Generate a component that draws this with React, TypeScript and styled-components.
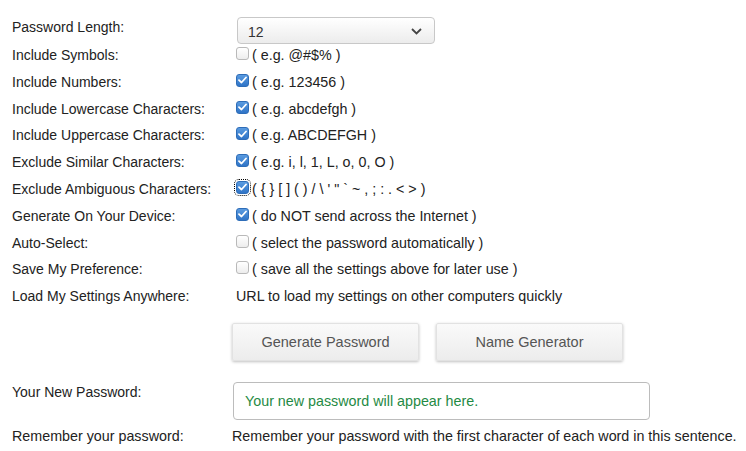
import React from "react";
import styled, { createGlobalStyle, css } from "styled-components";

const Global = createGlobalStyle`
  html, body { margin: 0; padding: 0; background: #fff; }
  body { font-family: "Liberation Sans", Arial, sans-serif; font-size: 14px; color: #222; }
`;

const Page = styled.div`
  padding: 17px 0 0 12px;
  display: flex;
  flex-direction: column;
`;

const Settings = styled.div`
  display: flex;
  flex-direction: column;
  gap: 6.8px;
`;

const Row = styled.div<{ $first?: boolean }>`
  display: grid;
  grid-template-columns: 220px 1fr;
  align-items: center;
  height: 20px;
  ${(p) => p.$first && css`
    align-items: start;
    height: 27px;
    margin-bottom: -5.8px;
  `}
`;

const Label = styled.div`
  line-height: 20px;
  white-space: nowrap;
`;

const Value = styled.div`
  display: flex;
  align-items: center;
  padding-left: 4px;
  line-height: 20px;
  font-size: 14.3px;
  white-space: nowrap;
`;

const Select = styled.div`
  margin-left: 1px;
  width: 198px;
  height: 27px;
  box-sizing: border-box;
  border: 1px solid #c8c8c8;
  border-radius: 4px;
  background: linear-gradient(#ffffff, #ececec);
  display: flex;
  align-items: center;
  justify-content: space-between;
  padding: 2px 12px 0 10px;
  color: #333;
  font-size: 14px;
`;

const Box = styled.span<{ $checked: boolean; $focus?: boolean }>`
  box-sizing: border-box;
  width: 13px;
  height: 13px;
  border-radius: 3px;
  margin-right: 3px;
  margin-top: -3px;
  display: inline-flex;
  align-items: center;
  justify-content: center;
  ${(p) =>
    p.$checked
      ? css`
          background: linear-gradient(#5a9be0, #2f74c7);
          border: 1px solid #2e6db8;
        `
      : css`
          background: linear-gradient(#ffffff, #ededed);
          border: 1px solid #b9b9b9;
        `}
  ${(p) => p.$focus && css`
    outline: 1px dotted #000;
    outline-offset: 1px;
  `}
`;

const Checkbox = ({ checked, focus }: { checked: boolean; focus?: boolean }) => (
  <Box $checked={checked} $focus={focus} role="checkbox" aria-checked={checked}>
    {checked && (
      <svg width="9" height="8" viewBox="0 0 9 8">
        <path d="M1 4.2 L3.5 6.5 L8 1.5" fill="none" stroke="#fff" strokeWidth="1.8" strokeLinecap="round" strokeLinejoin="round" />
      </svg>
    )}
  </Box>
);

const Buttons = styled.div`
  display: flex;
  gap: 17px;
  margin: 17px 0 0 220px;
`;

const Button = styled.button`
  width: 187px;
  height: 38px;
  border: 1px solid #e2e2e2;
  border-radius: 2px;
  background: linear-gradient(#fafafa, #ececec);
  box-shadow: 0 1px 3px rgba(0, 0, 0, 0.25);
  font-family: "Liberation Sans", Arial, sans-serif;
  font-size: 14.5px;
  color: #555;
  padding: 0;
`;

const Output = styled.div`
  display: grid;
  grid-template-columns: 221px 1fr;
  align-items: start;
  margin-top: 21px;
`;

const OutputBox = styled.div`
  width: 417px;
  height: 38px;
  box-sizing: border-box;
  border: 1px solid #bcbcbc;
  border-radius: 4px;
  display: flex;
  align-items: center;
  padding: 0 0 0 11px;
  color: #1f8a44;
  font-size: 14.3px;
`;

const LastRow = styled.div`
  display: grid;
  grid-template-columns: 220px 1fr;
  margin-top: 6px;
  line-height: 20px;
  font-size: 14.3px;
  white-space: nowrap;
`;

const rows: { label: string; checked?: boolean; focus?: boolean; text: string; plain?: boolean }[] = [
  { label: "Include Symbols:", checked: false, text: "( e.g. @#$% )" },
  { label: "Include Numbers:", checked: true, text: "( e.g. 123456 )" },
  { label: "Include Lowercase Characters:", checked: true, text: "( e.g. abcdefgh )" },
  { label: "Include Uppercase Characters:", checked: true, text: "( e.g. ABCDEFGH )" },
  { label: "Exclude Similar Characters:", checked: true, text: "( e.g. i, l, 1, L, o, 0, O )" },
  { label: "Exclude Ambiguous Characters:", checked: true, focus: true, text: "( { } [ ] ( ) / \\ ' \" ` ~ , ; : . < > )" },
  { label: "Generate On Your Device:", checked: true, text: "( do NOT send across the Internet )" },
  { label: "Auto-Select:", checked: false, text: "( select the password automatically )" },
  { label: "Save My Preference:", checked: false, text: "( save all the settings above for later use )" },
  { label: "Load My Settings Anywhere:", plain: true, text: "URL to load my settings on other computers quickly" },
];

export default function App() {
  return (
    <>
      <Global />
      <Page>
        <Settings>
          <Row $first>
            <Label>Password Length:</Label>
            <Value>
              <Select>
                <span>12</span>
                <svg width="11" height="7" viewBox="0 0 11 7">
                  <path d="M1 1 L5.5 5.5 L10 1" fill="none" stroke="#444" strokeWidth="1.8" />
                </svg>
              </Select>
            </Value>
          </Row>
          {rows.map((r) => (
            <Row key={r.label}>
              <Label>{r.label}</Label>
              <Value>
                {!r.plain && <Checkbox checked={!!r.checked} focus={r.focus} />}
                {r.text}
              </Value>
            </Row>
          ))}
        </Settings>
        <Buttons>
          <Button>Generate Password</Button>
          <Button>Name Generator</Button>
        </Buttons>
        <Output>
          <Label>Your New Password:</Label>
          <OutputBox>Your new password will appear here.</OutputBox>
        </Output>
        <LastRow>
          <span>Remember your password:</span>
          <span>Remember your password with the first character of each word in this sentence.</span>
        </LastRow>
      </Page>
    </>
  );
}
